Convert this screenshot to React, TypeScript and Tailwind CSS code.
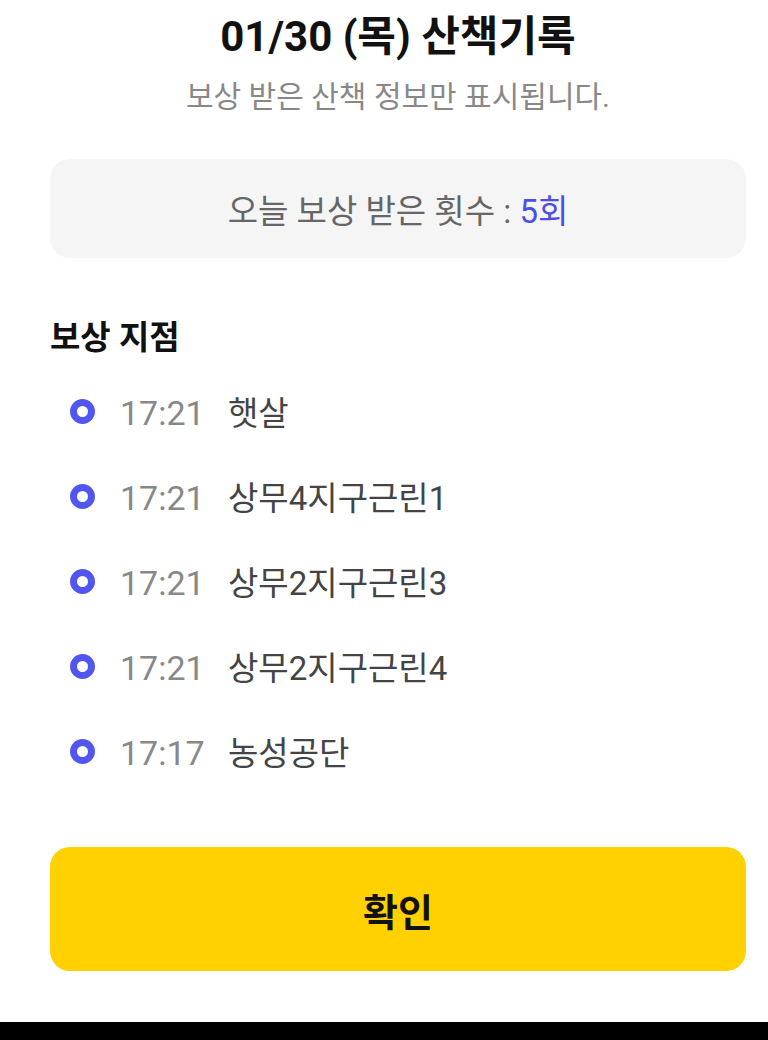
const points = [
  { time: '17:21', name: '햇살' },
  { time: '17:21', name: '상무4지구근린1' },
  { time: '17:21', name: '상무2지구근린3' },
  { time: '17:21', name: '상무2지구근린4' },
  { time: '17:17', name: '농성공단' },
]

const font = { fontFamily: "Roboto, 'Noto Sans CJK KR', sans-serif" }

export default function App() {
  return (
    <div className="h-[1040px] flex flex-col bg-white" style={font}>
      <div className="flex-1 flex flex-col pl-[50px] pr-[22px] pt-[12px]">
        <h1 className="text-center text-[42px] leading-[50px] font-bold text-[#111]">
          01/30 (목) 산책기록
        </h1>
        <p className="mt-[17px] text-center text-[30px] leading-[36px] text-[#888]">
          보상 받은 산책 정보만 표시됩니다.
        </p>

        <div className="mt-[44px] h-[99px] rounded-[20px] bg-[#f5f5f5] flex items-center justify-center pt-[6px]">
          <span className="text-[33px] text-[#666]">
            오늘 보상 받은 횟수 : <span className="text-[#4b4fe6]">5회</span>
          </span>
        </div>

        <h2 className="mt-[60px] text-[33px] leading-[40px] font-bold text-[#111]">보상 지점</h2>

        <ul className="mt-[11px] flex flex-col">
          {points.map((p, i) => (
            <li key={i} className="h-[85px] flex items-center">
              <span className="ml-[20px] w-[25px] h-[25px] rounded-full border-[7px] border-[#5256f0] shrink-0" />
              <span className="ml-[25px] w-[108px] pt-[4px] text-[34px] text-[#888]">{p.time}</span>
              <span className="pt-[4px] text-[33px] text-[#444]">{p.name}</span>
            </li>
          ))}
        </ul>

        <button className="mt-[53px] h-[124px] rounded-[20px] bg-[#ffd100] text-[38px] font-bold text-[#111] pt-[8px]">
          확인
        </button>
      </div>
      <div className="h-[18px] bg-black" />
    </div>
  )
}
